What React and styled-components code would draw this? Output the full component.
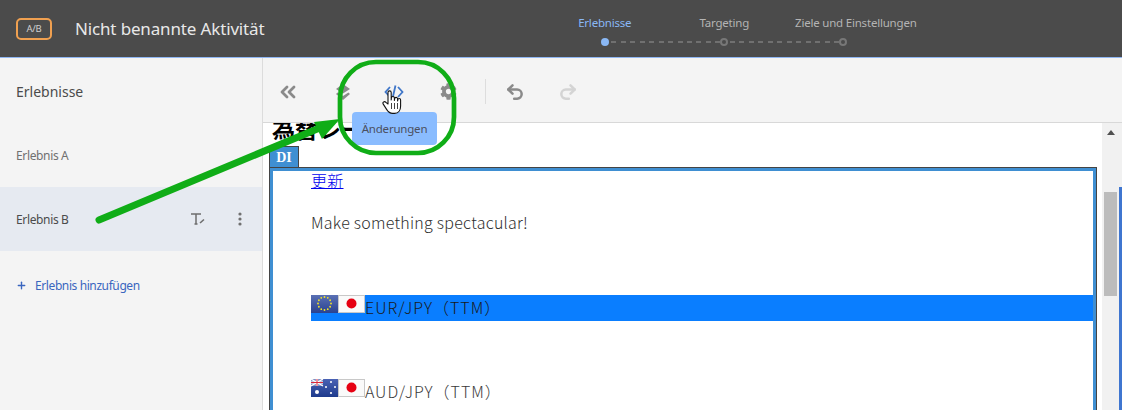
import styled, {createGlobalStyle} from "styled-components";
import {ChevronsLeft, Undo2, Redo2, Plus} from "lucide-react";
import {FaCog} from "react-icons/fa";

const Global = createGlobalStyle`
  html, body {
    margin: 0;
    padding: 0;
    width: 1122px;
    height: 410px;
    overflow: hidden;
    background: #f4f4f4;
    font-family: "Noto Sans", "Liberation Sans", sans-serif;
  }
`;

const Shell = styled.div`
  position: relative;
  width: 1122px;
  height: 410px;
  overflow: hidden;
  display: flex;
  flex-direction: column;
`;

const Header = styled.header`
  flex: none;
  height: 57px;
  display: flex;
  align-items: center;
  background: #4b4b4b;
  border-bottom: 1px solid #8fb6f3;
`;

const Badge = styled.div`
  width: 32px;
  height: 18px;
  margin-left: 16px;
  border: 2px solid #f0a050;
  border-radius: 5px;
  color: #d0d0d0;
  font-size: 9.5px;
  line-height: 18px;
  text-align: center;
  letter-spacing: -0.3px;
`;

const Title = styled.h1`
  margin: 0 0 0 23px;
  width: 470px;
  font-size: 17px;
  font-weight: 400;
  letter-spacing: -0.15px;
  color: #e8e8e8;
`;

const Stepper = styled.div`
  display: flex;
  flex-direction: column;
  margin-top: 3px;
`;

const StepLabels = styled.div`
  display: grid;
  grid-template-columns: repeat(3, 119.5px);
`;

const StepLabel = styled.span`
  font-size: 11.5px;
  line-height: 16px;
  letter-spacing: -0.2px;
  text-align: center;
  white-space: nowrap;
  color: ${p => (p.$active ? "#8ab8f5" : "#b4b4b4")};
  margin-left: ${p => p.$shift || 0}px;
`;

const Track = styled.div`
  display: flex;
  align-items: center;
  height: 8px;
  margin: 7px 0 0 56px;
`;

const Dot = styled.span`
  flex: none;
  box-sizing: border-box;
  width: 8px;
  height: 8px;
  border-radius: 50%;
  background: ${p => (p.$active ? "#8ab8f5" : "transparent")};
  border: ${p => (p.$active ? "none" : "2px solid #777")};
`;

const Dash = styled.span`
  flex: none;
  width: 111px;
  height: 2px;
  background: repeating-linear-gradient(to right, transparent 0 2px, #707070 2px 7px, transparent 7px 9.5px);
`;

const Body = styled.div`
  flex: 1;
  display: flex;
  min-height: 0;
`;

const Sidebar = styled.aside`
  flex: none;
  width: 262px;
  border-right: 1px solid #dcdcdc;
  background: #f4f4f4;
`;

const SideTitle = styled.div`
  height: 65px;
  padding: 1px 0 0 16px;
  box-sizing: border-box;
  display: flex;
  align-items: center;
  font-size: 14px;
  color: #4b4b4b;
`;

const SideRow = styled.div`
  height: 64px;
  padding: 0 20px 0 16px;
  display: flex;
  align-items: center;
  font-size: 12px;
  letter-spacing: -0.35px;
  color: ${p => (p.$active ? "#4b4b4b" : "#707070")};
  background: ${p => (p.$active ? "#e6eaf1" : "transparent")};
`;

const RowName = styled.span`
  flex: 1;
`;

const RowIcon = styled.svg`
  display: block;
  margin-left: ${p => p.$gap || 0}px;
`;

const AddRow = styled.div`
  height: 68px;
  padding-left: 16px;
  display: flex;
  align-items: center;
  gap: 8px;
  font-size: 12px;
  letter-spacing: -0.4px;
  color: #3a66bf;
`;

const Main = styled.main`
  flex: 1;
  min-width: 0;
  display: flex;
  flex-direction: column;
`;

const Toolbar = styled.div`
  flex: none;
  height: 65px;
  padding-top: 3px;
  box-sizing: border-box;
  display: flex;
  align-items: center;
  background: #f4f4f4;
  border-bottom: 1px solid #d8d8d8;
`;

const ToolButton = styled.div`
  width: 53px;
  height: 32px;
  box-sizing: border-box;
  padding-right: ${p => p.$nudge || 0}px;
  display: flex;
  align-items: center;
  justify-content: center;
  color: ${p => p.$color || "#8a8a8a"};
`;

const Separator = styled.div`
  width: 1px;
  height: 25px;
  margin: 0 3px 0 10px;
  background: #dddddd;
`;

const Viewport = styled.div`
  flex: 1;
  min-height: 0;
  display: flex;
  background: #fff;
`;

const Page = styled.div`
  flex: none;
  width: 839px;
  padding-left: 6px;
  box-sizing: border-box;
  overflow: hidden;
`;

const Heading = styled.h2`
  margin: -7px 0 6px;
  padding-left: 3px;
  font-family: "Noto Sans CJK JP", sans-serif;
  font-size: 23px;
  line-height: 24px;
  font-weight: 700;
  color: #000;
  white-space: nowrap;
`;

const Tab = styled.div`
  box-sizing: border-box;
  width: 30px;
  height: 22px;
  margin-bottom: -1px;
  background: #3f8fd2;
  border: 1px solid #444;
  border-bottom: none;
  color: #fff;
  font-family: "Liberation Serif", serif;
  font-weight: 700;
  font-size: 14px;
  line-height: 21px;
  text-align: center;
`;

const Frame = styled.div`
  box-sizing: border-box;
  width: 828px;
  height: 300px;
  padding: 1px 0 0 41px;
  border: 1px solid #444;
  outline: 3px solid #3f8fd2;
  outline-offset: -4px;
  font-family: "Noto Sans CJK JP", sans-serif;
  font-size: 16px;
  font-weight: 300;
  letter-spacing: 0.25px;
  color: #2e2e2e;
`;

const UpdateLink = styled.a`
  display: block;
  width: max-content;
  line-height: 22px;
  color: #0000ee;
  text-decoration: underline;
`;

const Para = styled.p`
  margin: 20px 0 62px;
  line-height: 22px;
`;

const RateRow = styled.div`
  display: flex;
  align-items: flex-start;
  height: 26px;
  margin: ${p => p.$top || 0}px 2px 0 0;
  line-height: 24px;
  letter-spacing: 1px;
  color: ${p => (p.$selected ? "#1a1a1a" : "#3a3a3a")};
  background: ${p => (p.$selected ? "#0a7eff" : "transparent")};
`;

const FlagBox = styled.svg`
  flex: none;
  display: block;
  width: 27px;
  height: 18px;
`;

const Scrollbar = styled.div`
  flex: none;
  width: 17px;
  background: #f1f1f1;
  display: flex;
  flex-direction: column;
  align-items: center;
`;

const ArrowUp = styled.div`
  margin-top: 7px;
  width: 0;
  height: 0;
  border-left: 4px solid transparent;
  border-right: 4px solid transparent;
  border-bottom: 5px solid #505050;
`;

const Thumb = styled.div`
  margin-top: 57px;
  width: 13px;
  height: 104px;
  background: #bcbcbc;
`;

const Edge = styled.div`
  flex: 1;
  background: linear-gradient(#f1f1f1 64px, #3f76d0 64px);
`;

const Tooltip = styled.div`
  position: absolute;
  left: 352px;
  top: 112px;
  width: 85px;
  height: 33px;
  border-radius: 4px;
  background: #8abcff;
  color: #4b5060;
  font-size: 11.5px;
  line-height: 33px;
  text-align: center;
  letter-spacing: -0.2px;
`;

const Annotation = styled.svg`
  position: absolute;
  left: 0;
  top: 0;
  pointer-events: none;
`;

function LayersIcon() {
    return (
        <svg width="18" height="18" viewBox="0 0 18 18" fill="#8a8a8a">
            <path d="M9 1l7 5-7 4.600L2 6z"/>
            <path d="M3.600 9.400L9 13l5.400-3.600L16 11l-7 6-7-6z"/>
        </svg>
    );
}

function CodeIcon() {
    return (
        <svg width="24" height="16" viewBox="0 0 24 16" fill="none" stroke="#3f76c8" strokeWidth="1.8">
            <path d="M6 3L1.500 8 6 13"/>
            <path d="M14 3l4.500 5L14 13"/>
            <path d="M11.500 1.500l-3 13"/>
        </svg>
    );
}

function TextEditIcon() {
    return (
        <RowIcon width="16" height="16" viewBox="0 0 16 16" fill="none" stroke="#6e6e6e">
            <path d="M1 3h10M6 3v10M4.500 13h3" strokeWidth="1.5"/>
            <path d="M10 12l4-3.500" strokeWidth="1.6"/>
        </RowIcon>
    );
}

function KebabIcon() {
    return (
        <RowIcon $gap={32} width="4" height="14" viewBox="0 0 4 14" fill="#707070">
            <circle cx="2" cy="2" r="1.6"/>
            <circle cx="2" cy="7" r="1.6"/>
            <circle cx="2" cy="12" r="1.6"/>
        </RowIcon>
    );
}

function FlagJp() {
    return (
        <FlagBox viewBox="0 0 27 18">
            <rect x="0.5" y="0.5" width="26" height="17" fill="#fafafa" stroke="#c8c8c8"/>
            <circle cx="13.5" cy="8.5" r="5" fill="#e60012"/>
        </FlagBox>
    );
}

function FlagEu() {
    const stars = Array.from({length: 12}, (_, i) => {
        const a = (i * Math.PI) / 6;
        return <circle key={i} cx={13.5 + 6.5 * Math.cos(a)} cy={8.5 + 6.5 * Math.sin(a)} r="0.9" fill="#f5e625"/>;
    });
    return (
        <FlagBox viewBox="0 0 27 18">
            <defs>
                <linearGradient id="euBlue" x1="0" y1="0" x2="0" y2="1">
                    <stop offset="0" stopColor="#5a70b4"/>
                    <stop offset="1" stopColor="#2a4290"/>
                </linearGradient>
            </defs>
            <rect width="27" height="18" fill="url(#euBlue)"/>
            {stars}
        </FlagBox>
    );
}

function FlagAu() {
    return (
        <FlagBox viewBox="0 0 27 18">
            <defs>
                <linearGradient id="auBlue" x1="0" y1="0" x2="0" y2="1">
                    <stop offset="0" stopColor="#4a62b4"/>
                    <stop offset="1" stopColor="#1d3a8c"/>
                </linearGradient>
            </defs>
            <rect width="27" height="18" fill="url(#auBlue)"/>
            <rect width="12" height="7" fill="#8090c4"/>
            <path d="M0 0l12 7M12 0L0 7" stroke="#fff" strokeWidth="1.2"/>
            <path d="M6 0v7M0 3.5h12" stroke="#fff" strokeWidth="2.2"/>
            <path d="M6 0v7M0 3.5h12" stroke="#d8283c" strokeWidth="1"/>
            <circle cx="6" cy="13" r="2" fill="#fff"/>
            <circle cx="20" cy="3" r="1" fill="#fff"/>
            <circle cx="15" cy="8" r="1" fill="#fff"/>
            <circle cx="24" cy="8" r="1" fill="#fff"/>
            <circle cx="20" cy="14" r="1.1" fill="#fff"/>
        </FlagBox>
    );
}

function App() {
    return (
        <>
            <Global/>
            <Shell>
                <Header>
                    <Badge>A/B</Badge>
                    <Title>Nicht benannte Aktivität</Title>
                    <Stepper>
                        <StepLabels>
                            <StepLabel $active>Erlebnisse</StepLabel>
                            <StepLabel>Targeting</StepLabel>
                            <StepLabel $shift={11}>Ziele und Einstellungen</StepLabel>
                        </StepLabels>
                        <Track>
                            <Dot $active/>
                            <Dash/>
                            <Dot/>
                            <Dash/>
                            <Dot/>
                        </Track>
                    </Stepper>
                </Header>
                <Body>
                    <Sidebar>
                        <SideTitle>Erlebnisse</SideTitle>
                        <SideRow><RowName>Erlebnis A</RowName></SideRow>
                        <SideRow $active>
                            <RowName>Erlebnis B</RowName>
                            <TextEditIcon/>
                            <KebabIcon/>
                        </SideRow>
                        <AddRow><Plus size={11} strokeWidth={3}/>Erlebnis hinzufügen</AddRow>
                    </Sidebar>
                    <Main>
                        <Toolbar>
                            <ToolButton $nudge={3}><ChevronsLeft size={24} strokeWidth={2.8}/></ToolButton>
                            <ToolButton><LayersIcon/></ToolButton>
                            <ToolButton><CodeIcon/></ToolButton>
                            <ToolButton><FaCog size={17}/></ToolButton>
                            <Separator/>
                            <ToolButton $nudge={2}><Undo2 size={20} strokeWidth={3}/></ToolButton>
                            <ToolButton $nudge={2} $color="#d4d4d4"><Redo2 size={20} strokeWidth={3}/></ToolButton>
                        </Toolbar>
                        <Viewport>
                            <Page>
                                <Heading>為替レート</Heading>
                                <Tab>DI</Tab>
                                <Frame>
                                    <UpdateLink>更新</UpdateLink>
                                    <Para>Make something spectacular!</Para>
                                    <RateRow $selected><FlagEu/><FlagJp/>EUR/JPY（TTM）</RateRow>
                                    <RateRow $top={58}><FlagAu/><FlagJp/>AUD/JPY（TTM）</RateRow>
                                </Frame>
                            </Page>
                            <Scrollbar>
                                <ArrowUp/>
                                <Thumb/>
                            </Scrollbar>
                            <Edge/>
                        </Viewport>
                    </Main>
                </Body>
                <Tooltip>Änderungen</Tooltip>
                <Annotation width="1122" height="410" viewBox="0 0 1122 410">
                    <path d="M99 220L322 127" stroke="#10ad17" strokeWidth="7" strokeLinecap="round" fill="none"/>
                    <path d="M314 122L340 119 322 139z" fill="#10ad17"/>
                    <rect x="340" y="62" width="114" height="91" rx="36" fill="none" stroke="#10ad17" strokeWidth="4.700"/>
                    <path d="M388 104V92.500a1.600 1.600 0 013.200 0V100l.2-2a1.500 1.500 0 013 0v2.500l.2-1.600a1.500 1.500 0 013 0v2l.2-1a1.400 1.400 0 012.800 0v6c0 4-2 7.500-6 7.500h-2c-3 0-4.500-1.500-6-4l-3.500-5.500c-1-1.800 1.500-3 2.800-1.500z" fill="#fff" stroke="#111" strokeWidth="1.1" strokeLinejoin="round"/>
                    <path d="M391.500 103v6M394.500 103v6M397.500 103v6" stroke="#111" strokeWidth="0.8"/>
                </Annotation>
            </Shell>
        </>
    );
}

export default App;
